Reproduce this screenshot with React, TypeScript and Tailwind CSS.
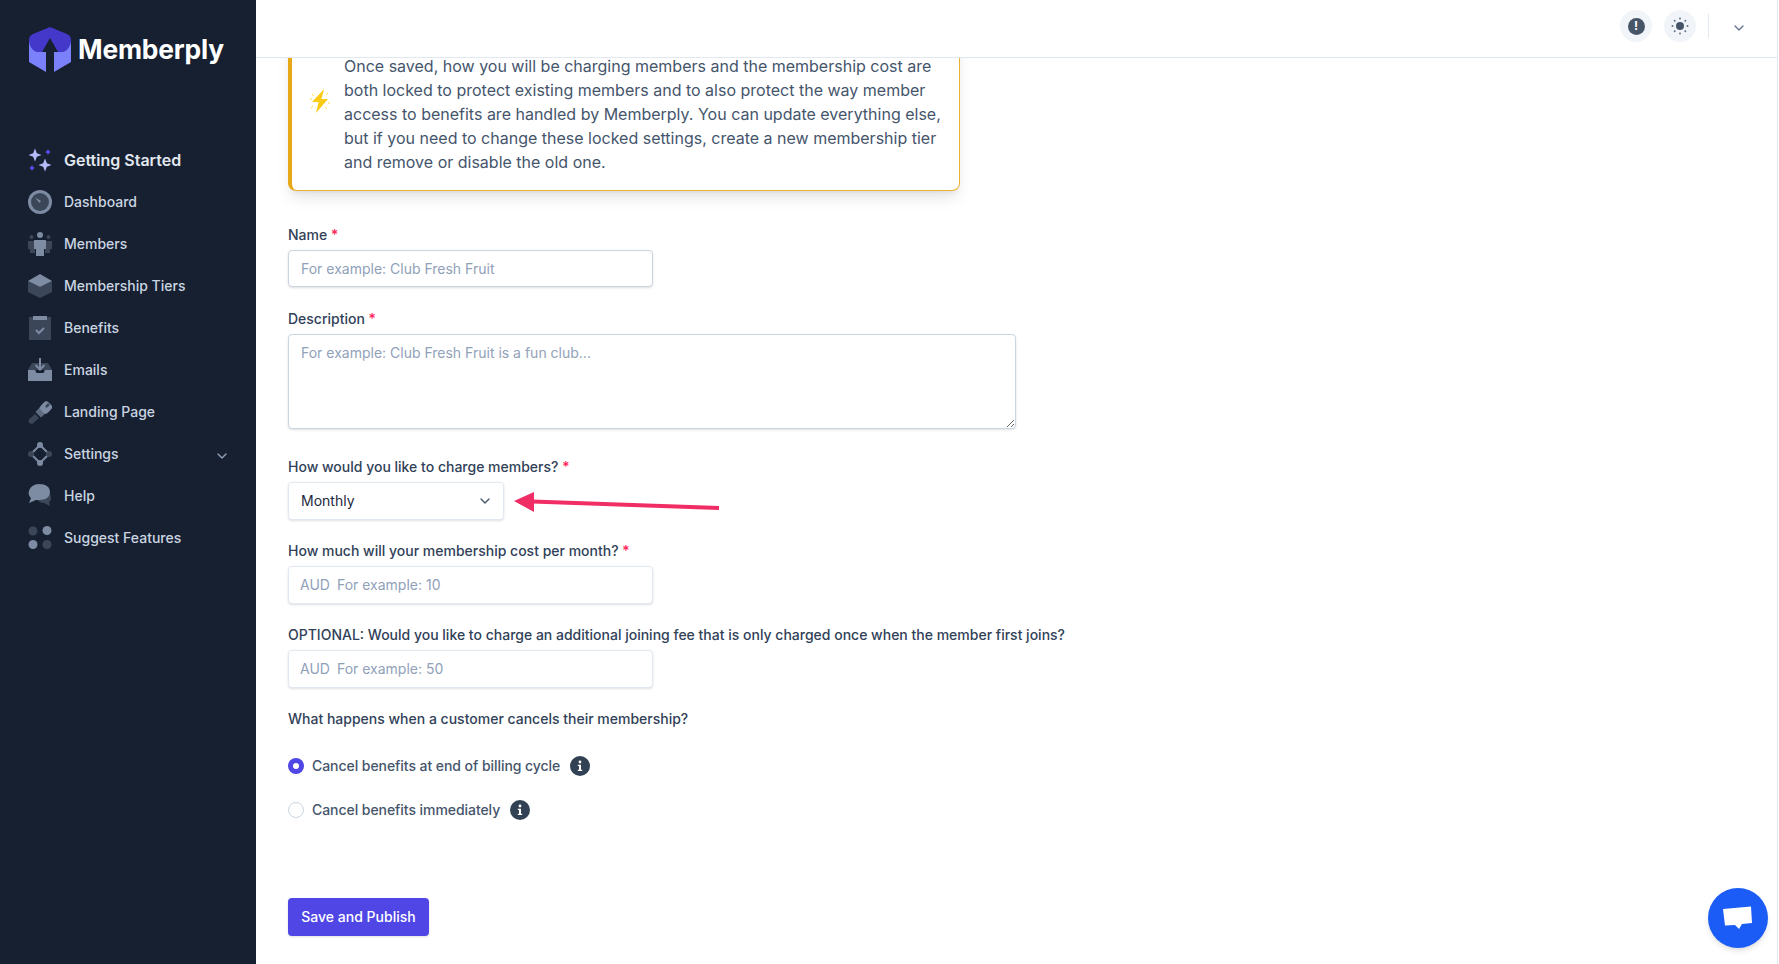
import { ChevronDown } from 'lucide-react';
import type { ReactNode } from 'react';

const LIGHT = '#7d8ba3';
const DARK = '#3b4759';

function Logo() {
  return (
    <svg width="42" height="46" viewBox="0 0 42 46" fill="none">
      <path d="M0 14V35L17 45V25H9ZM42 14V35L25 45V25H33Z" fill="#7b80fb" />
      <path d="M21 0 38 7c3 1.500 4 3 4 6 0 6-4 12-9 12h-4L21 11 13 25H9c-5 0-9-6-9-12 0-3 1-4.500 4-6L21 0Z" fill="#4338ca" />
    </svg>
  );
}

function Sparkles() {
  return (
    <svg width="24" height="24" viewBox="0 0 24 24" fill="#5b52f0">
      <path d="M7 .5 8.800 5.200 13.500 7 8.800 8.800 7 13.500 5.200 8.800 .5 7 5.200 5.200Z" fill="#b4bcfc" />
      <path d="M17 10.500 18.800 15.200 23.500 17 18.800 18.800 17 23.500 15.200 18.800 10.500 17 15.200 15.200Z" fill="#b4bcfc" />
      <path d="M20 1 21 3 23 4 21 5 20 7 19 5 17 4 19 3Z" />
      <path d="M4 17 5 19 7 20 5 21 4 23 3 21 1 20 3 19Z" />
    </svg>
  );
}

function Dashboard() {
  return (
    <svg width="24" height="24" viewBox="0 0 24 24">
      <circle cx="12" cy="12" r="12" fill={LIGHT} />
      <circle cx="12" cy="12" r="9" fill={DARK} />
      <path d="M7 7.500 13 11l-1.500 2L7 7.500Z" fill={LIGHT} />
    </svg>
  );
}

function Members() {
  return (
    <svg width="24" height="24" viewBox="0 0 24 24">
      <circle cx="3.500" cy="5" r="2" fill={DARK} />
      <circle cx="20.500" cy="5" r="2" fill={DARK} />
      <path d="M0 9h7v12H2v-4H0V9ZM17 9h7v8h-2v4h-5V9Z" fill={DARK} />
      <circle cx="12" cy="3" r="3" fill={LIGHT} />
      <path d="M6 8h12v9h-2v7H8v-7H6V8Z" fill={LIGHT} />
    </svg>
  );
}

function Tiers() {
  return (
    <svg width="24" height="24" viewBox="0 0 24 24">
      <path d="M0 7v11l12 6V13L0 7ZM24 7v11l-12 6V13l12-6Z" fill={DARK} />
      <path d="M12 0 24 7l-12 6L0 7l12-7Z" fill={LIGHT} />
    </svg>
  );
}

function Benefits() {
  return (
    <svg width="24" height="24" viewBox="0 0 24 24">
      <rect x="1" y="1" width="22" height="23" fill={DARK} />
      <rect x="5" y="0" width="14" height="4" fill={LIGHT} />
      <path d="m8 14 3 3 5-5" stroke={LIGHT} strokeWidth="2" fill="none" />
    </svg>
  );
}

function Emails() {
  return (
    <svg width="24" height="24" viewBox="0 0 24 24">
      <path d="M4 5h16l4 7H0l4-7Z" fill={DARK} />
      <path d="M0 12h7l1.500 3h7L17 12h7v11H0V12Z" fill={LIGHT} />
      <path d="M12 0v11M7.500 7l4.500 4.500L16.500 7" stroke={LIGHT} strokeWidth="2" fill="none" />
    </svg>
  );
}

function Landing() {
  return (
    <svg width="24" height="24" viewBox="0 0 24 24">
      <path d="M7 14l4 4-6 5.500a3 3 0 0 1-4-4L7 14Z" fill={DARK} />
      <path d="M12 7 18 13l-5 4.500-5.500-5.500L12 7Z" fill={LIGHT} opacity=".7" />
      <rect x="13" y="2" width="10" height="11" rx="3.500" transform="rotate(45 18 7.500)" fill={LIGHT} />
      <ellipse cx="19.500" cy="5.500" rx="2.500" ry="1.500" transform="rotate(-45 19.500 5.500)" fill={DARK} />
    </svg>
  );
}

function Settings() {
  return (
    <svg width="24" height="24" viewBox="0 0 24 24" fill="none">
      <path d="M12 3 21 12 12 21 3 12Z" stroke={LIGHT} strokeWidth="2" />
      <circle cx="12" cy="3" r="3" fill={LIGHT} />
      <circle cx="12" cy="21" r="3" fill={LIGHT} />
      <circle cx="3" cy="12" r="3" fill={DARK} />
      <circle cx="21" cy="12" r="3" fill={DARK} />
    </svg>
  );
}

function Help() {
  return (
    <svg width="24" height="24" viewBox="0 0 24 24">
      <path d="M10 10h12c2 4 1 7-1 8l1 4-6-3c-6 0-8-4-6-9Z" fill={DARK} />
      <path d="M11 0c7 0 11 3 11 8s-4 8-11 8H8l-7 3 2-5C1 12 0 10 1 7c1-4 5-7 10-7Z" fill={LIGHT} />
    </svg>
  );
}

function Suggest() {
  return (
    <svg width="24" height="24" viewBox="0 0 24 24">
      <circle cx="5" cy="5" r="4.500" fill={DARK} />
      <circle cx="19" cy="4.500" r="4.500" fill={LIGHT} />
      <circle cx="5" cy="18.500" r="4.500" fill={LIGHT} />
      <circle cx="19" cy="18.500" r="4.500" fill={DARK} />
    </svg>
  );
}

function Bolt() {
  return (
    <svg width="20" height="24" viewBox="0 0 20 24" fill="none">
      <path d="M14 0 2 13h6.500L6 24l12-14h-6.500L14 0Z" fill="#facc15" />
      <path d="M2 5l2 2M0 10h2M1 19l2-2M18 4l-2 2M20 14h-2M17 20l-2-2" stroke="#fde047" strokeWidth="1" />
    </svg>
  );
}

function Sun() {
  return (
    <svg width="20" height="20" viewBox="0 0 20 20" fill="#475569">
      <circle cx="10" cy="10" r="4" />
      <g fill="#64748b">
        <circle cx="10" cy="2.500" r="1" />
        <circle cx="10" cy="17.500" r="1" />
        <circle cx="2.500" cy="10" r="1" />
        <circle cx="17.500" cy="10" r="1" />
        <circle cx="4.700" cy="4.700" r="1" />
        <circle cx="15.300" cy="4.700" r="1" />
        <circle cx="4.700" cy="15.300" r="1" />
        <circle cx="15.300" cy="15.300" r="1" />
      </g>
    </svg>
  );
}

function Info() {
  return (
    <span className="flex h-5 w-5 items-center justify-center rounded-full bg-[#334155]">
      <svg width="12" height="12" viewBox="0 0 12 12" fill="white">
        <circle cx="6" cy="2" r="1.400" />
        <path d="M3.800 4.800H7v5h1.200V11H3.800V9.800H5V6H3.800V4.800Z" />
      </svg>
    </span>
  );
}

const NAV: { label: string; icon: ReactNode; chevron?: boolean }[] = [
  { label: 'Dashboard', icon: <Dashboard /> },
  { label: 'Members', icon: <Members /> },
  { label: 'Membership Tiers', icon: <Tiers /> },
  { label: 'Benefits', icon: <Benefits /> },
  { label: 'Emails', icon: <Emails /> },
  { label: 'Landing Page', icon: <Landing /> },
  { label: 'Settings', icon: <Settings />, chevron: true },
  { label: 'Help', icon: <Help /> },
  { label: 'Suggest Features', icon: <Suggest /> },
];

function Sidebar() {
  return (
    <aside className="flex h-full w-[256px] shrink-0 flex-col bg-[#172030] pl-[28px] pr-[26px]">
      <div className="flex items-center gap-[8px] pl-px pt-[27px]">
        <Logo />
        <span className="-ml-px pb-[2px] text-[26.4px] leading-[44px] font-bold tracking-[-0.2px] text-white">Memberply</span>
      </div>
      <nav className="mt-[66px] flex flex-col">
        <a className="flex h-[42px] items-center gap-3 text-base font-semibold text-slate-200">
          <Sparkles />
          Getting Started
        </a>
        {NAV.map((item) => (
          <a key={item.label} className="flex h-[42px] items-center gap-3 text-sm font-medium text-slate-300">
            {item.icon}
            <span className="flex-1">{item.label}</span>
            {item.chevron && <ChevronDown className="mt-[3px] h-4 w-4 text-slate-400" />}
          </a>
        ))}
      </nav>
    </aside>
  );
}

function Header() {
  return (
    <header className="flex h-[58px] shrink-0 items-center justify-end border-b border-slate-200 bg-white pb-[5px] pr-[30px]">
      <span className="flex h-8 w-8 items-center justify-center rounded-full bg-slate-100">
        <span className="flex h-[17px] w-[17px] items-center justify-center rounded-full bg-[#475569] text-[12px] leading-none font-bold text-white">!</span>
      </span>
      <span className="ml-3 flex h-8 w-8 items-center justify-center rounded-full bg-slate-100">
        <Sun />
      </span>
      <span className="ml-3 h-6 w-px bg-slate-200" />
      <ChevronDown className="ml-[22px] mt-[3px] h-4 w-4 text-slate-500" />
    </header>
  );
}

function Label({ children, required }: { children: ReactNode; required?: boolean }) {
  return (
    <label className="block text-sm font-medium text-slate-700">
      {children}
      {required && <span className="text-rose-500"> *</span>}
    </label>
  );
}

function MoneyInput({ placeholder }: { placeholder: string }) {
  return (
    <div className="mt-[5px] flex h-[38px] w-[365px] items-center rounded border border-slate-200 bg-white px-[11px] text-sm shadow-sm">
      <span className="text-slate-400">AUD</span>
      <input className="ml-[7px] min-w-0 flex-1 bg-transparent outline-none placeholder:text-slate-400" placeholder={placeholder} />
    </div>
  );
}

function Notice() {
  return (
    <div className="flex h-[180px] w-[672px] items-center rounded-lg border border-l-4 border-[#ebb02f] border-l-[#e6a817] bg-white shadow-lg">
      <span className="ml-[18px] flex w-5 shrink-0 justify-center">
        <Bolt />
      </span>
      <p className="ml-[14px] mt-[26px] w-[612px] text-base leading-6 text-slate-600">
        Once saved, how you will be charging members and the membership cost are both locked to protect existing members and to also protect the way member access to benefits are handled by Memberply. You can update everything else, but if you need to change these locked settings, create a new membership tier and remove or disable the old one.
      </p>
    </div>
  );
}

export default function App() {
  return (
    <div className="flex h-[964px] w-full overflow-hidden bg-white font-['Inter',sans-serif]">
      <Sidebar />
      <main className="mr-px flex min-w-0 flex-1 flex-col border-r border-slate-200">
        <Header />
        <div className="min-h-0 flex-1 overflow-hidden pl-[32px]">
          <div className="-mt-[47px]">
            <Notice />

            <div className="mt-[34px]">
              <Label required>Name</Label>
              <input
                className="mt-[5px] block h-[37px] w-[365px] rounded border border-slate-300 bg-white px-3 text-sm text-slate-800 shadow-sm placeholder:text-slate-400 outline-none"
                placeholder="For example: Club Fresh Fruit"
              />
            </div>

            <div className="mt-[22px]">
              <Label required>Description</Label>
              <textarea
                className="mt-[5px] block h-[95px] w-[728px] rounded border border-slate-300 bg-white px-3 py-2 text-sm shadow-sm placeholder:text-slate-400 outline-none"
                placeholder="For example: Club Fresh Fruit is a fun club..."
              />
            </div>

            <div className="mt-[28px]">
              <Label required>How would you like to charge members?</Label>
              <div className="mt-[5px] flex items-center">
                <div className="flex h-[38px] w-[216px] items-center justify-between rounded border border-slate-200 bg-white pl-3 pr-[10px] text-sm text-slate-800 shadow-sm">
                  Monthly
                  <ChevronDown className="h-4 w-4 text-slate-600" />
                </div>
                <svg className="ml-[10px] mt-[3px]" width="206" height="24" viewBox="0 0 206 24" fill="none">
                  <path d="M18 10.500 205 17" stroke="#f02d65" strokeWidth="4" />
                  <path d="M0 10 20 1v20L0 10Z" fill="#f02d65" />
                </svg>
              </div>
            </div>

            <div className="mt-[21px]">
              <Label required>How much will your membership cost per month?</Label>
              <MoneyInput placeholder="For example: 10" />
            </div>

            <div className="mt-[21px]">
              <Label>OPTIONAL: Would you like to charge an additional joining fee that is only charged once when the member first joins?</Label>
              <MoneyInput placeholder="For example: 50" />
            </div>

            <div className="mt-[21px]">
              <Label>What happens when a customer cancels their membership?</Label>
            </div>

            <div className="mt-[27px] flex h-5 items-center text-sm font-medium tracking-[-0.06px] text-slate-600">
              <span className="flex h-4 w-4 items-center justify-center rounded-full bg-[#4f46e5]">
                <span className="h-1.5 w-1.5 rounded-full bg-white" />
              </span>
              <span className="ml-2">Cancel benefits at end of billing cycle</span>
              <span className="ml-[10px]"><Info /></span>
            </div>

            <div className="mt-[24px] flex h-5 items-center text-sm font-medium tracking-[-0.06px] text-slate-600">
              <span className="h-4 w-4 rounded-full border border-slate-300 bg-white" />
              <span className="ml-2">Cancel benefits immediately</span>
              <span className="ml-[10px]"><Info /></span>
            </div>

            <button className="mt-[78px] h-[38px] w-[141px] rounded bg-[#4f46e5] text-sm font-medium text-white shadow-sm">
              Save and Publish
            </button>
          </div>
        </div>
      </main>

      <button className="absolute bottom-[16px] right-[11px] flex h-[60px] w-[60px] items-center justify-center rounded-full bg-[#1a5cf5] shadow-md">
        <svg width="30" height="26" viewBox="0 0 30 26" fill="white">
          <path d="M0 4 28 1.500 29 18 19 19l-3 5-4-4-10 .5L0 4Z" />
        </svg>
      </button>
    </div>
  );
}
